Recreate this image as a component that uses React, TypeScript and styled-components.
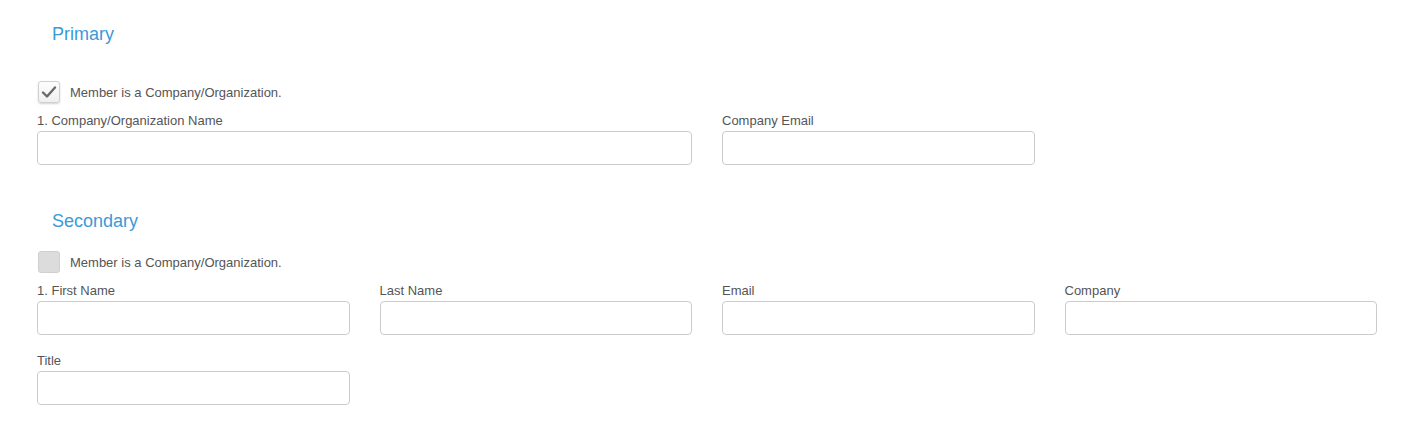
import React from "react";
import styled, { createGlobalStyle } from "styled-components";

const Global = createGlobalStyle`
  html, body { margin: 0; padding: 0; background: #fff; }
  body { font-family: "Liberation Sans", Arial, Helvetica, sans-serif; color: #555; }
  * { box-sizing: border-box; }
`;

const Page = styled.div`
  padding: 24px 19px 0 22px;
`;

const Section = styled.section<{ $gap: number }>`
  margin-bottom: ${(p) => p.$gap}px;
`;

const Heading = styled.h3`
  margin: 0 0 0 30px;
  font-size: 18px;
  line-height: 20px;
  font-weight: 400;
  color: #3b9ad8;
`;

const CheckRow = styled.label<{ $top: number }>`
  display: flex;
  align-items: center;
  gap: 10px;
  margin: ${(p) => p.$top}px 15px 0 16px;
  font-size: 13px;
  color: #555;
  height: 22px;
`;

const Box = styled.span<{ $checked: boolean }>`
  width: 22px;
  height: 22px;
  border-radius: 3px;
  display: flex;
  align-items: center;
  justify-content: center;
  border: 1px solid ${(p) => (p.$checked ? "#d0d0d0" : "#cfcfcf")};
  background: ${(p) => (p.$checked ? "linear-gradient(#fdfdfd, #f0f0f0)" : "#dcdcdc")};
  box-shadow: ${(p) => (p.$checked ? "0 1px 2px rgba(0,0,0,0.18)" : "none")};
`;

const Grid = styled.div`
  display: grid;
  grid-template-columns: repeat(4, 1fr);
  margin-top: 10px;
  row-gap: 18px;
`;

const Field = styled.div<{ $span?: number }>`
  grid-column: span ${(p) => p.$span ?? 1};
  padding: 0 15px;
  display: flex;
  flex-direction: column;
`;

const Label = styled.span`
  font-size: 13px;
  line-height: 15px;
  color: #555;
  margin-bottom: 3px;
`;

const Input = styled.input`
  height: 34px;
  width: 100%;
  border: 1px solid #ccc;
  border-radius: 4px;
  background: #fff;
  font: inherit;
  padding: 6px 12px;
  outline: none;
`;

const Check = () => (
  <svg width="16" height="14" viewBox="0 0 16 14">
    <path d="M2 7.5 L6 11.5 L14 2.5" fill="none" stroke="#6a6a6a" strokeWidth="2.4" strokeLinecap="round" strokeLinejoin="round" />
  </svg>
);

export default function App() {
  return (
    <>
      <Global />
      <Page>
        <Section $gap={46}>
          <Heading>Primary</Heading>
          <CheckRow $top={37}>
            <Box $checked>
              <Check />
            </Box>
            Member is a Company/Organization.
          </CheckRow>
          <Grid>
            <Field $span={2}>
              <Label>1. Company/Organization Name</Label>
              <Input />
            </Field>
            <Field>
              <Label>Company Email</Label>
              <Input />
            </Field>
          </Grid>
        </Section>
        <Section $gap={20}>
          <Heading>Secondary</Heading>
          <CheckRow $top={20}>
            <Box $checked={false} />
            Member is a Company/Organization.
          </CheckRow>
          <Grid>
            <Field>
              <Label>1. First Name</Label>
              <Input />
            </Field>
            <Field>
              <Label>Last Name</Label>
              <Input />
            </Field>
            <Field>
              <Label>Email</Label>
              <Input />
            </Field>
            <Field>
              <Label>Company</Label>
              <Input />
            </Field>
            <Field>
              <Label>Title</Label>
              <Input />
            </Field>
          </Grid>
        </Section>
      </Page>
    </>
  );
}
